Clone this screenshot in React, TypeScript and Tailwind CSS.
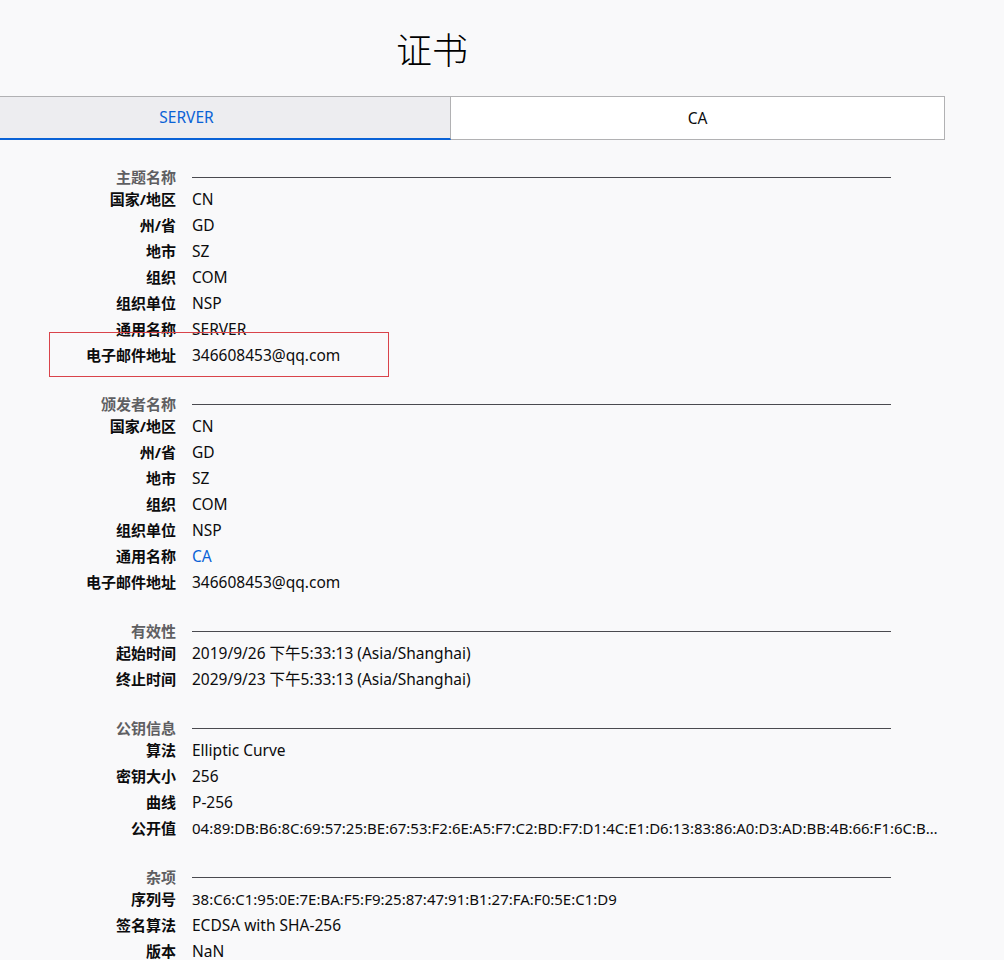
type Row = { label: string; value: string; link?: boolean; hex?: boolean };
type Section = { title: string; rows: Row[] };

const sections: Section[] = [
  {
    title: "主题名称",
    rows: [
      { label: "国家/地区", value: "CN" },
      { label: "州/省", value: "GD" },
      { label: "地市", value: "SZ" },
      { label: "组织", value: "COM" },
      { label: "组织单位", value: "NSP" },
      { label: "通用名称", value: "SERVER" },
      { label: "电子邮件地址", value: "346608453@qq.com" },
    ],
  },
  {
    title: "颁发者名称",
    rows: [
      { label: "国家/地区", value: "CN" },
      { label: "州/省", value: "GD" },
      { label: "地市", value: "SZ" },
      { label: "组织", value: "COM" },
      { label: "组织单位", value: "NSP" },
      { label: "通用名称", value: "CA", link: true },
      { label: "电子邮件地址", value: "346608453@qq.com" },
    ],
  },
  {
    title: "有效性",
    rows: [
      { label: "起始时间", value: "2019/9/26 下午5:33:13 (Asia/Shanghai)" },
      { label: "终止时间", value: "2029/9/23 下午5:33:13 (Asia/Shanghai)" },
    ],
  },
  {
    title: "公钥信息",
    rows: [
      { label: "算法", value: "Elliptic Curve" },
      { label: "密钥大小", value: "256" },
      { label: "曲线", value: "P-256" },
      {
        label: "公开值",
        hex: true,
        value:
          "04:89:DB:B6:8C:69:57:25:BE:67:53:F2:6E:A5:F7:C2:BD:F7:D1:4C:E1:D6:13:83:86:A0:D3:AD:BB:4B:66:F1:6C:B2:1A:9E:47:0D:3C:55:81:E2",
      },
    ],
  },
  {
    title: "杂项",
    rows: [
      { label: "序列号", hex: true, value: "38:C6:C1:95:0E:7E:BA:F5:F9:25:87:47:91:B1:27:FA:F0:5E:C1:D9" },
      { label: "签名算法", value: "ECDSA with SHA-256" },
      { label: "版本", value: "NaN" },
    ],
  },
];

function CertSection({ section, first }: { section: Section; first: boolean }) {
  return (
    <div className={first ? "mt-[28px]" : "mt-[27px]"}>
      <div className="flex items-center gap-4 h-[18px]">
        <div className="w-[176px] text-right font-semibold text-[#5f5f62] leading-[18px]">{section.title}</div>
        <div className="w-[699px] h-px bg-[#4a4a4f]" />
      </div>
      {section.rows.map((r) => (
        <div key={r.label} className="flex gap-4 leading-[26px]">
          <div className="w-[176px] shrink-0 text-right font-bold text-[#0c0c0d]">{r.label}</div>
          <div
            className={`w-[750px] truncate ${r.hex ? "text-[15px]" : "text-[15.5px]"} ${
              r.link ? "text-[#0a62d6]" : "text-[#0c0c0d]"
            }`}
          >
            {r.value}
          </div>
        </div>
      ))}
    </div>
  );
}

export default function App() {
  return (
    <div
      className="relative min-h-screen overflow-hidden bg-[#f9f9fa] text-[15px] text-[#0c0c0d]"
      style={{ fontFamily: '"Noto Sans", "Noto Sans CJK SC", sans-serif' }}
    >
      {/* Title */}
      <div className="w-[864px] h-[96px] flex items-center justify-center">
        <h1 className="text-[36px] font-light text-black" style={{ fontFamily: '"Noto Sans CJK SC", sans-serif' }}>
          证书
        </h1>
      </div>

      {/* Tabs */}
      <div className="flex ml-[-78px] h-[44px] text-[15.5px]">
        <div className="w-[529px] flex items-center justify-center pt-px bg-[#ededf0] border border-[#b1b1b3] border-b-2 border-b-[#0a62d6] text-[#0a62d6]">
          SERVER
        </div>
        <div className="w-[494px] flex items-center justify-center pt-px bg-white border border-l-0 border-[#b1b1b3]">
          CA
        </div>
      </div>

      {/* Details */}
      <div>
        {sections.map((s, i) => (
          <CertSection key={s.title} section={s} first={i === 0} />
        ))}
      </div>

      {/* annotation box */}
      <div className="absolute left-[49px] top-[332px] w-[340px] h-[45px] border border-[#d9434a]" />
    </div>
  );
}
